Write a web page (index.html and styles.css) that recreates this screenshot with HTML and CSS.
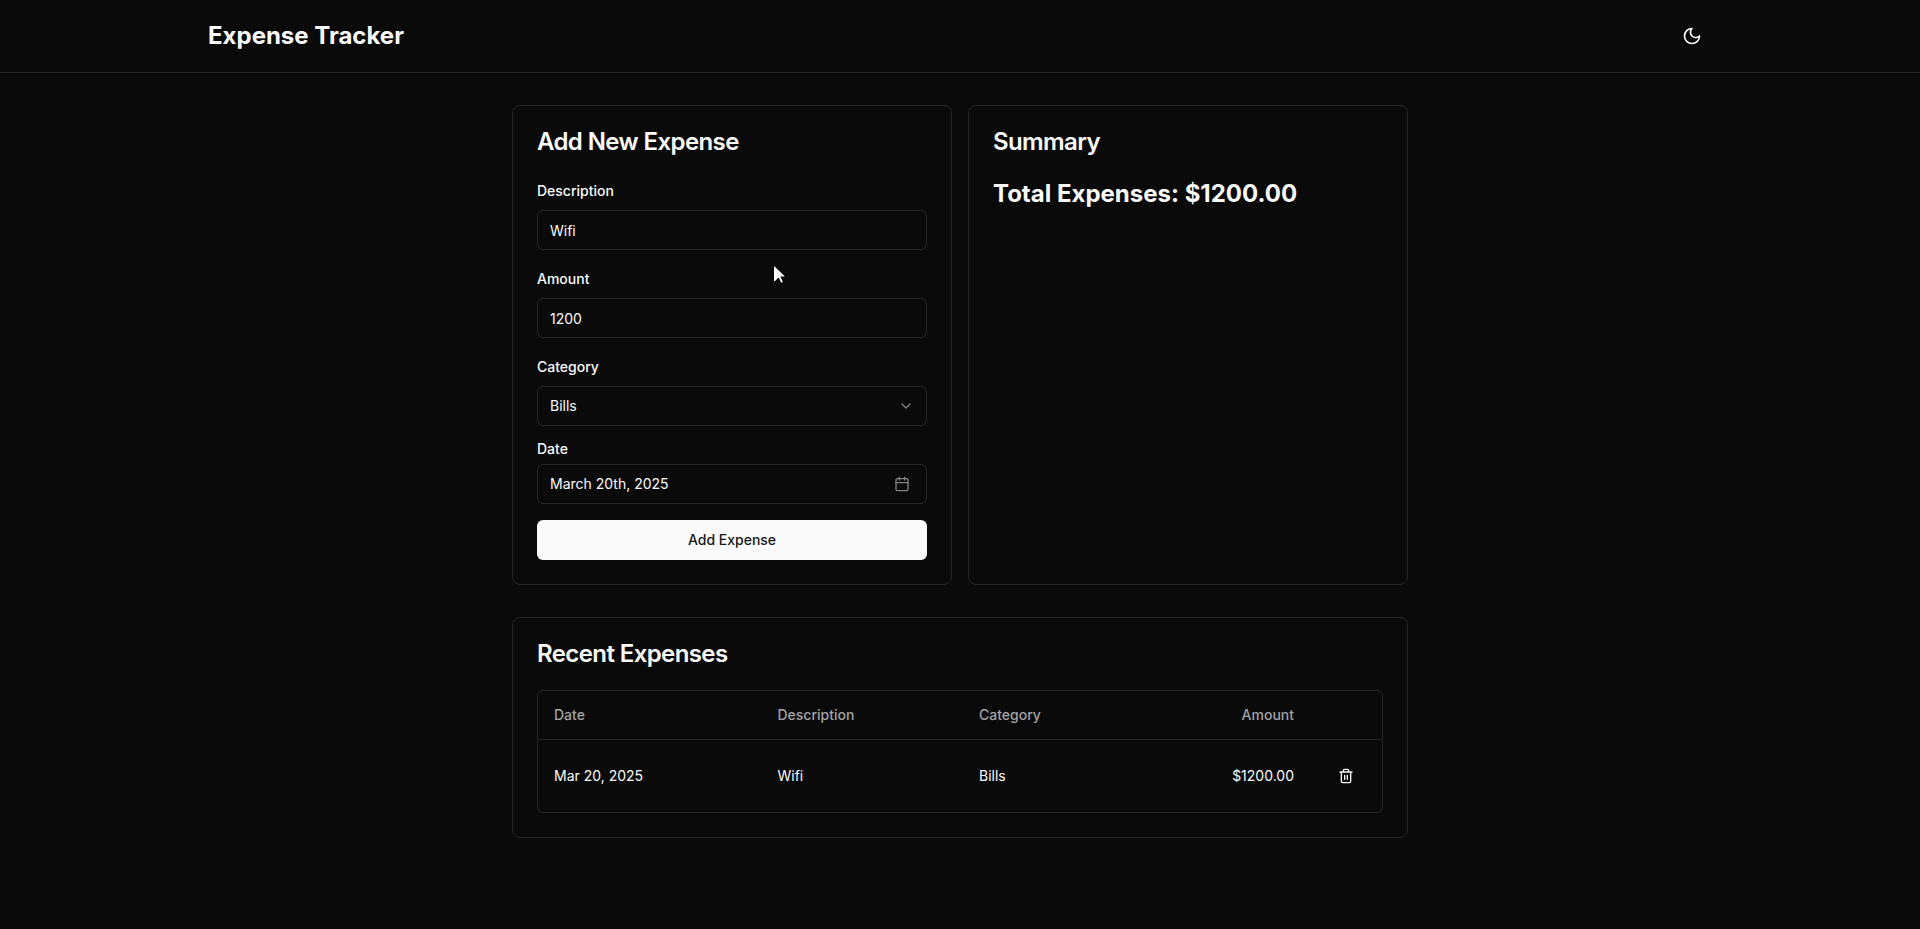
FILE: index.html
```html
<!DOCTYPE html>
<html lang="en">
<head>
<meta charset="utf-8">
<title>Expense Tracker</title>
<link rel="stylesheet" href="styles.css">
</head>
<body>
<header class="header">
  <div class="header-inner">
    <h1 class="brand">Expense Tracker</h1>
    <button class="icon-button" aria-label="Toggle theme">
      <svg class="icon icon-moon" viewBox="0 0 24 24"><path d="M12 3a6 6 0 0 0 9 9 9 9 0 1 1-9-9Z"/></svg>
    </button>
  </div>
</header>
<main class="main">
  <div class="top-grid">
    <section class="card">
      <h2 class="card-title">Add New Expense</h2>
      <form class="form">
        <div class="field">
          <label class="label" for="description">Description</label>
          <input class="control" id="description" value="Wifi">
        </div>
        <div class="field">
          <label class="label" for="amount">Amount</label>
          <input class="control" id="amount" value="1200">
        </div>
        <div class="field">
          <label class="label" for="category">Category</label>
          <button class="control select" id="category" type="button">Bills
            <svg class="icon icon-muted" viewBox="0 0 24 24"><path d="m6 9 6 6 6-6"/></svg>
          </button>
        </div>
        <div class="field">
          <label class="label label-tight" for="date">Date</label>
          <button class="control select date" id="date" type="button">March 20th, 2025
            <svg class="icon icon-muted" viewBox="0 0 24 24"><path d="M8 2v4M16 2v4M3 10h18"/><rect width="18" height="18" x="3" y="4" rx="2"/></svg>
          </button>
        </div>
        <button class="submit" type="button">Add Expense</button>
      </form>
    </section>
    <section class="card">
      <h2 class="card-title">Summary</h2>
      <p class="total">Total Expenses: $1200.00</p>
    </section>
  </div>
  <section class="card">
    <h2 class="card-title">Recent Expenses</h2>
    <div class="table">
      <div class="row head">
        <span>Date</span><span>Description</span><span>Category</span><span class="right">Amount</span><span></span>
      </div>
      <div class="row">
        <span>Mar 20, 2025</span><span>Wifi</span><span>Bills</span><span class="right">$1200.00</span>
        <button class="icon-button delete" aria-label="Delete expense">
          <svg class="icon" viewBox="0 0 24 24"><path d="M3 6h18M19 6v14c0 1-1 2-2 2H7c-1 0-2-1-2-2V6M8 6V4c0-1 1-2 2-2h4c1 0 2 1 2 2v2M10 11v6M14 11v6"/></svg>
        </button>
      </div>
    </div>
  </section>
</main>
<svg class="cursor" viewBox="0 0 11 17"><path d="M0 0V15H1L4 12H5L7 16.5H8.5V15L6.5 11V10.5H10.5V10Z"/></svg>
</body>
</html>
```
FILE: styles.css
```css
* { box-sizing: border-box; margin: 0; }
body {
  min-height: 100vh;
  background: #0a0a0a;
  color: #fafafa;
  font-family: Inter, "Liberation Sans", sans-serif;
  font-size: 14px;
  line-height: 20px;
}
button, input { font: inherit; color: inherit; }
.header { border-bottom: 1px solid #262626; }
.header-inner {
  display: flex;
  align-items: center;
  justify-content: space-between;
  max-width: 1536px;
  margin: 0 auto;
  padding: 16px;
}
.brand { font-size: 24px; line-height: 32px; font-weight: 700; }
.icon-button {
  display: flex;
  align-items: center;
  justify-content: center;
  width: 40px;
  height: 40px;
  padding: 0;
  border: 0;
  background: none;
}
.icon {
  width: 16px;
  height: 16px;
  flex: none;
  fill: none;
  stroke: currentColor;
  stroke-width: 2;
  stroke-linecap: round;
  stroke-linejoin: round;
}
.icon-moon { width: 20px; height: 20px; }
.icon-muted { opacity: .5; }
.main {
  display: grid;
  gap: 32px;
  width: 896px;
  margin: 0 auto;
  padding: 32px 0;
}
.top-grid { display: grid; grid-template-columns: 1fr 1fr; gap: 16px; }
.card { padding: 24px; border: 1px solid #262626; border-radius: 8px; }
.card-title {
  margin-bottom: 24px;
  font-size: 24px;
  line-height: 24px;
  font-weight: 600;
  letter-spacing: -0.6px;
}
.form { display: flex; flex-direction: column; gap: 16px; }
.field { display: flex; flex-direction: column; gap: 8px; }
.label { height: 24px; font-weight: 500; line-height: 26px; }
.label-tight { height: 14px; line-height: 14px; }
.control {
  width: 100%;
  height: 40px;
  padding: 0 12px;
  border: 1px solid #262626;
  border-radius: 6px;
  background: #0a0a0a;
}
.select {
  display: flex;
  align-items: center;
  justify-content: space-between;
  text-align: left;
}
.date { padding-right: 16px; }
.submit {
  height: 40px;
  border: 0;
  border-radius: 6px;
  background: #fafafa;
  color: #171717;
  font-weight: 500;
}
.total { font-size: 24px; line-height: 32px; font-weight: 700; }
.table { border: 1px solid #262626; border-radius: 6px; }
.row {
  display: grid;
  grid-template-columns: 223.5px 201.5px 1fr auto 72px;
  align-items: center;
  height: 72px;
}
.row span { padding: 0 16px; }
.head {
  height: 49px;
  border-bottom: 1px solid #262626;
  color: #a3a3a3;
  font-weight: 500;
}
.right { text-align: right; }
.delete { margin: 0 auto; }
.cursor {
  position: absolute;
  left: 774px;
  top: 266px;
  width: 11px;
  height: 17px;
  fill: #fff;
}
```
